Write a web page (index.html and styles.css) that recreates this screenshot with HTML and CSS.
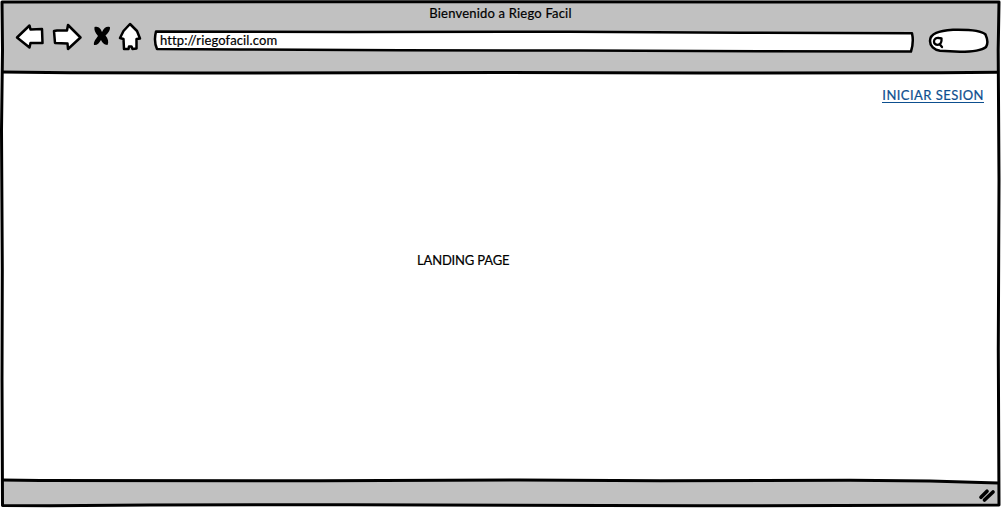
FILE: index.html
```html
<!DOCTYPE html>
<html lang="es">
<head>
<meta charset="utf-8">
<title>Bienvenido a Riego Facil</title>
<link rel="stylesheet" href="styles.css">
</head>
<body>
<div class="window">
  <svg class="frame" viewBox="0 0 1001 508" aria-hidden="true">
    <path class="bar" d="M2 2H999V73L2 72ZM2 480L850 480L999 483V505L2 505Z"/>
    <path class="line" d="M2 2L400 1.8L999 2L998.2 50L999 180L998.3 350L999 505L700 505.8L350 504.7L150 505L50 505.8L2.500 505.500L2 380L2.300 270L1.500 130L2.500 50Z"/>
    <path class="line" d="M2 72L70 72.8L200 73L500 72.4L700 73L940 72.7L998 72.3"/>
    <path class="line" d="M2 480L40 480.600L320 480.7L520 480L660 480.700L850 480.2L930 481L998 483"/>
  </svg>
  <header class="header">
    <h1 class="title">Bienvenido a Riego Facil</h1>
    <div class="toolbar">
      <svg class="nav" viewBox="0 20 148 36" aria-hidden="true">
        <path class="icon" d="M17 37.5L29.5 25.5L30.5 29.5L42 29L42.5 43L30.5 43L29.5 47.5Z"/>
        <path class="icon" d="M54 31L57 30.5L67 30.5L68 25L80.5 37.5L68 49L67.5 43.5L55 43Z"/>
        <path class="solid" d="M94.500 27C98.500 25.500 101 29 102 32C104 27.500 107 26 110 27.200C110.300 31 107.500 33.500 105.500 35.500C108 38.500 109 42 107.500 45C104 45 102 42 101 40C99 43.500 97 45.500 94 45C93.300 41.500 96 39 98 36C95 32.500 94 30 94.500 27Z"/>
        <path class="icon" d="M130 24L137 31L140 38.500L136.500 39L136.500 48.500L132.500 49L131.500 46.500L129 46.500L128.500 49L124 49L123.500 39L120 38L123.500 31Z"/>
      </svg>
      <div class="address">
        <svg class="outline" viewBox="152 30 764 24" aria-hidden="true">
          <path class="icon" d="M156 31.500L350 32L570 31.700L740 32.700L912 33.200Q914 42 911 51.500L760 51.300L580 50.500L400 50.300L240 49.500L157 49Q153.500 41 156 31.500Z"/>
        </svg>
        <span class="url">http://riegofacil.com</span>
      </div>
      <svg class="search" viewBox="926 26 64 30" aria-hidden="true">
        <path class="icon" d="M930 41C930 33 939 31 953 29.800C967 29.500 981 30 985.500 34.500C987.500 39 988 44 986 47C981 51 970 51.800 960 51.800L940 50.800C934 50 930 46 930 41Z"/>
        <path class="lens" d="M934 41.500C934 38.500 936.500 37.600 939 38L941.500 38.300C941.800 42 940.800 44.600 938 44.800C935.300 44.800 934 43.700 934 41.500ZM939.500 44L942 47"/>
      </svg>
    </div>
  </header>
  <main class="content">
    <a class="login" href="#">INICIAR SESION</a>
    <p class="landing">LANDING PAGE</p>
  </main>
  <footer class="status">
    <svg class="grip" viewBox="976 484 22 22" aria-hidden="true">
      <path d="M981 497.200L987 491.200M984.500 500L993 492"/>
    </svg>
  </footer>
</div>
</body>
</html>
```
FILE: styles.css
```css
* { box-sizing: border-box; }
body { margin: 0; background: #fff; }
.window {
  position: relative;
  width: 1001px;
  height: 508px;
  display: flex;
  flex-direction: column;
  overflow: hidden;
  font: 13px/18px Lato, "Open Sans", sans-serif;
  color: #000;
  -webkit-text-stroke: 0.2px currentColor;
}
.frame { position: absolute; inset: 0; width: 1001px; height: 508px; }
.bar { fill: #c1c1c1; }
.line { fill: none; stroke: #000; stroke-width: 3; stroke-linejoin: round; }
.header, .content, .status { position: relative; }
.header { height: 72px; padding-top: 4px; }
.title {
  margin: 0;
  font-size: 13px;
  font-weight: 400;
  line-height: 18px;
  letter-spacing: 0.2px;
  text-align: center;
}
.toolbar { display: flex; align-items: flex-start; }
.nav { width: 148px; height: 36px; margin-top: -2px; }
.icon { fill: #fff; stroke: #000; stroke-width: 2.5; stroke-linejoin: round; }
.solid { fill: #000; }
.address { position: relative; width: 764px; height: 24px; margin: 8px 0 0 4px; padding: 1px 0 0 8px; }
.outline { position: absolute; left: 0; top: 0; width: 764px; height: 24px; }
.url { position: relative; letter-spacing: 0.12px; }
.search { width: 64px; height: 30px; margin: 4px 0 0 10px; }
.lens { fill: none; stroke: #000; stroke-width: 2.3; stroke-linecap: round; stroke-linejoin: round; }
.content {
  height: 408px;
  padding: 15px 17px 0 0;
  display: flex;
  flex-direction: column;
  align-items: flex-start;
}
.login {
  align-self: flex-end;
  height: 16px;
  color: #0d4f8f;
  line-height: 17px;
  letter-spacing: 0.45px;
  text-decoration: none;
  border-bottom: 1px solid #0d4f8f;
}
.landing { margin: 148px 0 0 417px; letter-spacing: -0.17px; white-space: nowrap; }
.status { height: 28px; display: flex; justify-content: flex-end; padding: 4px 3px 0 0; }
.grip { width: 22px; height: 22px; fill: none; stroke: #000; stroke-width: 3.7; stroke-linecap: round; }
```
